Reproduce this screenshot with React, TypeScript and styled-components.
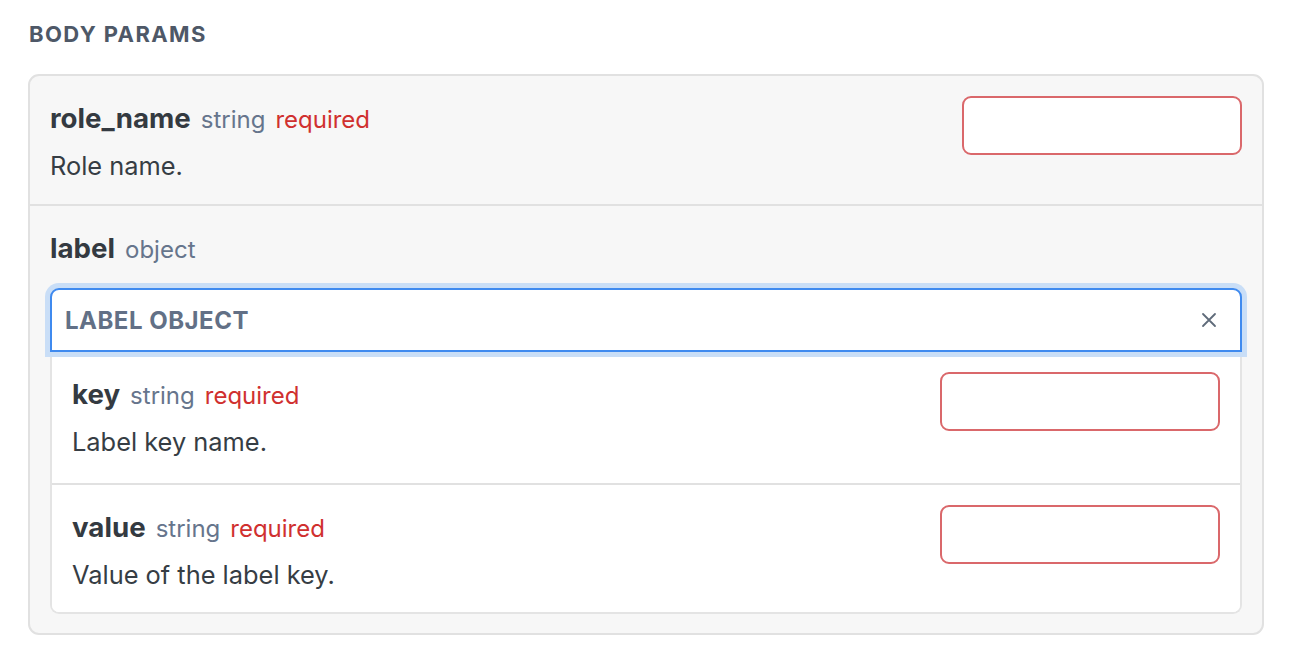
import React from 'react';
import styled, { createGlobalStyle } from 'styled-components';

const GlobalStyle = createGlobalStyle`
  body {
    margin: 0;
    background: #ffffff;
    font-family: Inter, 'Open Sans', sans-serif;
  }
`;

type ParamType = {
  name: string,
  type: string,
  required?: boolean,
  description?: string,
};

const labelParams: ParamType[] = [
  { name: 'key', type: 'string', required: true, description: 'Label key name.' },
  { name: 'value', type: 'string', required: true, description: 'Value of the label key.' },
];

const ParamRow = ({ param, nested }: { param: ParamType, nested?: boolean }) => (
  <Row nested={nested}>
    <ParamInfo>
      <ParamTitle>
        <ParamName>{param.name}</ParamName>
        <ParamType>{param.type}</ParamType>
        {param.required && <Required>required</Required>}
      </ParamTitle>
      {param.description && <Description>{param.description}</Description>}
    </ParamInfo>
    <ParamInput invalid={param.required} />
  </Row>
);

export default function App() {
  return (
    <Page>
      <GlobalStyle />
      <SectionTitle>Body Params</SectionTitle>
      <Card>
        <ParamRow param={{ name: 'role_name', type: 'string', required: true, description: 'Role name.' }} />
        <ObjectRow>
          <ParamTitle>
            <ParamName>label</ParamName>
            <ParamType>object</ParamType>
          </ParamTitle>
          <ObjectBox>
            <ObjectHeader>
              <ObjectTitle>label object</ObjectTitle>
              <CloseButton aria-label="close">
                <svg width="18" height="18" viewBox="0 0 18 18" fill="none">
                  <path d="M3 3L15 15M15 3L3 15" stroke="#5f6b7a" strokeWidth="1.8" strokeLinecap="round" />
                </svg>
              </CloseButton>
            </ObjectHeader>
            <ObjectBody>
              {labelParams.map((p) => <ParamRow key={p.name} param={p} nested={true} />)}
            </ObjectBody>
          </ObjectBox>
        </ObjectRow>
      </Card>
    </Page>
  );
}

const Page = styled.div`
  padding: 20px 36px 16px 28px;
  width: 1236px;
`;

const SectionTitle = styled.div`
  font-size: 22px;
  font-weight: 700;
  color: #4e5867;
  text-transform: uppercase;
  letter-spacing: 1.4px;
  padding-left: 1px;
  height: 28px;
  line-height: 28px;
  margin-bottom: 26px;
`;

const Card = styled.div`
  background: #f7f7f7;
  border: 2px solid #e1e1e1;
  border-radius: 11px;
  overflow: hidden;
`;

const Row = styled.div<{ nested?: boolean }>`
  display: flex;
  justify-content: space-between;
  align-items: flex-start;
  padding: 20px 20px ${(props) => props.nested ? '21px' : '18px'} 20px;
  border-bottom: 2px solid #e1e1e1;
  background: ${(props) => props.nested ? '#ffffff' : 'transparent'};
  &:last-child {
    border-bottom: none;
    padding-bottom: 17px;
  }
`;

const ParamInfo = styled.div`
  display: flex;
  flex-direction: column;
`;

const ParamTitle = styled.div`
  display: flex;
  align-items: baseline;
  gap: 10px;
  height: 44px;
  line-height: 44px;
`;

const ParamName = styled.span`
  font-size: 27.7px;
  font-weight: 700;
  color: #343a41;
`;

const ParamType = styled.span`
  font-size: 24px;
  color: #66758c;
`;

const Required = styled.span`
  font-size: 24px;
  color: #d0302f;
`;

const Description = styled.div`
  font-size: 25.4px;
  color: #363d44;
  margin-top: 6px;
  line-height: 40px;
`;

const ParamInput = styled.input<{ invalid?: boolean }>`
  width: 280px;
  height: 59px;
  box-sizing: border-box;
  border: 2px solid ${(props) => props.invalid ? '#da686b' : '#d6d6d6'};
  border-radius: 9px;
  background: #ffffff;
  outline: none;
`;

const ObjectRow = styled.div`
  padding: 20px 20px 19px 20px;
`;

const ObjectBox = styled.div`
  margin-top: 18px;
  border-radius: 9px;
`;

const ObjectHeader = styled.div`
  display: flex;
  align-items: center;
  justify-content: space-between;
  height: 64px;
  box-sizing: border-box;
  padding: 0 22px 0 13px;
  background: #ffffff;
  border: 2px solid #3f8aef;
  border-radius: 9px 9px 0 0;
  box-shadow: 0 0 0 5px #c9def7;
  position: relative;
  z-index: 1;
`;

const ObjectTitle = styled.div`
  font-size: 24px;
  font-weight: 700;
  color: #627086;
  text-transform: uppercase;
  letter-spacing: 0.5px;
`;

const CloseButton = styled.button`
  display: flex;
  align-items: center;
  justify-content: center;
  border: none;
  background: none;
  padding: 0;
  cursor: pointer;
`;

const ObjectBody = styled.div`
  border: 2px solid #e4e4e4;
  border-top: none;
  border-radius: 0 0 9px 9px;
  overflow: hidden;
  background: #ffffff;
`;
